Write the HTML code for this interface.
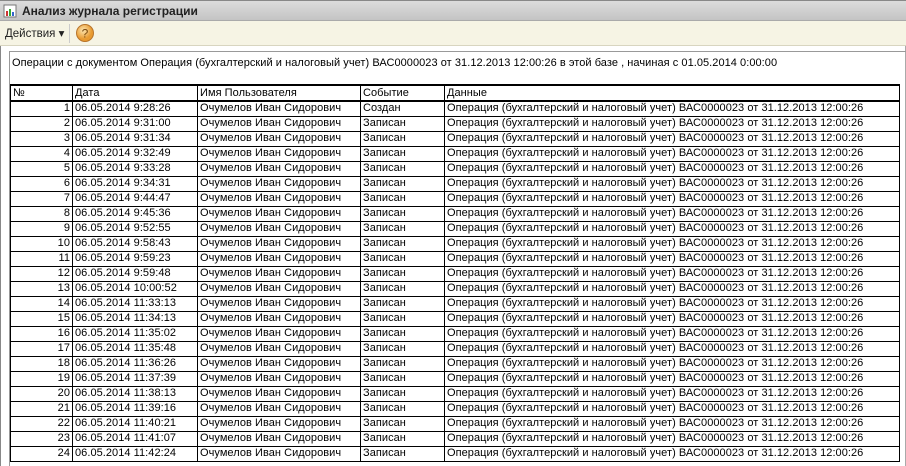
<!DOCTYPE html>
<html><head><meta charset="utf-8"><style>
*{margin:0;padding:0;box-sizing:border-box}
body{width:906px;height:466px;overflow:hidden;background:#fff;font-family:"Liberation Sans",Arial,sans-serif;font-size:11px;color:#000;position:relative;letter-spacing:0.05px}
#title{position:absolute;left:0;top:0;width:906px;height:21px;background:linear-gradient(#dcdcdc,#c4c4c4);border-top:1px solid #888;border-bottom:1px solid #aaa}
#title span{position:absolute;left:22px;top:3px;font-weight:bold;font-size:12px;color:#222;letter-spacing:0}
#tb{position:absolute;left:0;top:21px;width:906px;height:25px;background:#f6f4e4;border-bottom:1px solid #d8d5c0}
#tb .a{position:absolute;left:5px;top:5px;font-size:11.5px;color:#222;letter-spacing:0}
#frame{position:absolute;left:0;top:46px;width:906px;height:420px;border-left:1px solid #888;border-right:1px solid #aaa}
#panel{position:absolute;left:9px;top:51px;width:897px;height:415px;border-left:1px solid #999;border-top:1px solid #999}
#cap{position:absolute;left:12px;top:57px;white-space:nowrap}
table{position:absolute;left:10px;top:84px;border-collapse:collapse;table-layout:fixed}
td{height:15px;border:1px solid #000;padding:0 2px;white-space:nowrap;overflow:hidden;line-height:13px}
tr.h td{border-top:2px solid #000;border-bottom:2px solid #000;height:16px}
td.n{text-align:right}
</style></head><body>
<div id="title"><svg style="position:absolute;left:3px;top:3px" width="14" height="14"><rect x="1" y="1" width="12" height="12" fill="#fff" stroke="#777"/><rect x="3" y="7" width="2" height="5" fill="#c33"/><rect x="6" y="5" width="2" height="7" fill="#3a3"/><rect x="9" y="8" width="2" height="4" fill="#36c"/></svg><span>Анализ журнала регистрации</span></div>
<div id="tb"><span class="a">Действия ▾</span><div style="position:absolute;left:69px;top:3px;width:1px;height:19px;background:#ccc"></div>
<svg style="position:absolute;left:75px;top:2px" width="20" height="20"><defs><radialGradient id="g" cx="40%" cy="35%"><stop offset="0" stop-color="#fde6b0"/><stop offset="1" stop-color="#e89a30"/></radialGradient></defs><circle cx="10" cy="10" r="8.5" fill="url(#g)" stroke="#b8742a"/><text x="10" y="14.5" text-anchor="middle" font-size="12" font-family="Liberation Sans" fill="#7a4a10">?</text></svg></div>
<div id="frame"></div>
<div id="panel"></div>
<div id="cap">Операции с документом Операция (бухгалтерский и налоговый учет) ВАС0000023 от 31.12.2013 12:00:26 в этой базе , начиная с 01.05.2014 0:00:00</div>
<table>
<colgroup><col style="width:62px"><col style="width:125px"><col style="width:163px"><col style="width:84px"><col style="width:455px"></colgroup>
<tr class="h"><td>№</td><td>Дата</td><td>Имя Пользователя</td><td>Событие</td><td>Данные</td></tr>
<tr><td class="n">1</td><td>06.05.2014 9:28:26</td><td>Очумелов Иван Сидорович</td><td>Создан</td><td>Операция (бухгалтерский и налоговый учет) ВАС0000023 от 31.12.2013 12:00:26</td></tr>
<tr><td class="n">2</td><td>06.05.2014 9:31:00</td><td>Очумелов Иван Сидорович</td><td>Записан</td><td>Операция (бухгалтерский и налоговый учет) ВАС0000023 от 31.12.2013 12:00:26</td></tr>
<tr><td class="n">3</td><td>06.05.2014 9:31:34</td><td>Очумелов Иван Сидорович</td><td>Записан</td><td>Операция (бухгалтерский и налоговый учет) ВАС0000023 от 31.12.2013 12:00:26</td></tr>
<tr><td class="n">4</td><td>06.05.2014 9:32:49</td><td>Очумелов Иван Сидорович</td><td>Записан</td><td>Операция (бухгалтерский и налоговый учет) ВАС0000023 от 31.12.2013 12:00:26</td></tr>
<tr><td class="n">5</td><td>06.05.2014 9:33:28</td><td>Очумелов Иван Сидорович</td><td>Записан</td><td>Операция (бухгалтерский и налоговый учет) ВАС0000023 от 31.12.2013 12:00:26</td></tr>
<tr><td class="n">6</td><td>06.05.2014 9:34:31</td><td>Очумелов Иван Сидорович</td><td>Записан</td><td>Операция (бухгалтерский и налоговый учет) ВАС0000023 от 31.12.2013 12:00:26</td></tr>
<tr><td class="n">7</td><td>06.05.2014 9:44:47</td><td>Очумелов Иван Сидорович</td><td>Записан</td><td>Операция (бухгалтерский и налоговый учет) ВАС0000023 от 31.12.2013 12:00:26</td></tr>
<tr><td class="n">8</td><td>06.05.2014 9:45:36</td><td>Очумелов Иван Сидорович</td><td>Записан</td><td>Операция (бухгалтерский и налоговый учет) ВАС0000023 от 31.12.2013 12:00:26</td></tr>
<tr><td class="n">9</td><td>06.05.2014 9:52:55</td><td>Очумелов Иван Сидорович</td><td>Записан</td><td>Операция (бухгалтерский и налоговый учет) ВАС0000023 от 31.12.2013 12:00:26</td></tr>
<tr><td class="n">10</td><td>06.05.2014 9:58:43</td><td>Очумелов Иван Сидорович</td><td>Записан</td><td>Операция (бухгалтерский и налоговый учет) ВАС0000023 от 31.12.2013 12:00:26</td></tr>
<tr><td class="n">11</td><td>06.05.2014 9:59:23</td><td>Очумелов Иван Сидорович</td><td>Записан</td><td>Операция (бухгалтерский и налоговый учет) ВАС0000023 от 31.12.2013 12:00:26</td></tr>
<tr><td class="n">12</td><td>06.05.2014 9:59:48</td><td>Очумелов Иван Сидорович</td><td>Записан</td><td>Операция (бухгалтерский и налоговый учет) ВАС0000023 от 31.12.2013 12:00:26</td></tr>
<tr><td class="n">13</td><td>06.05.2014 10:00:52</td><td>Очумелов Иван Сидорович</td><td>Записан</td><td>Операция (бухгалтерский и налоговый учет) ВАС0000023 от 31.12.2013 12:00:26</td></tr>
<tr><td class="n">14</td><td>06.05.2014 11:33:13</td><td>Очумелов Иван Сидорович</td><td>Записан</td><td>Операция (бухгалтерский и налоговый учет) ВАС0000023 от 31.12.2013 12:00:26</td></tr>
<tr><td class="n">15</td><td>06.05.2014 11:34:13</td><td>Очумелов Иван Сидорович</td><td>Записан</td><td>Операция (бухгалтерский и налоговый учет) ВАС0000023 от 31.12.2013 12:00:26</td></tr>
<tr><td class="n">16</td><td>06.05.2014 11:35:02</td><td>Очумелов Иван Сидорович</td><td>Записан</td><td>Операция (бухгалтерский и налоговый учет) ВАС0000023 от 31.12.2013 12:00:26</td></tr>
<tr><td class="n">17</td><td>06.05.2014 11:35:48</td><td>Очумелов Иван Сидорович</td><td>Записан</td><td>Операция (бухгалтерский и налоговый учет) ВАС0000023 от 31.12.2013 12:00:26</td></tr>
<tr><td class="n">18</td><td>06.05.2014 11:36:26</td><td>Очумелов Иван Сидорович</td><td>Записан</td><td>Операция (бухгалтерский и налоговый учет) ВАС0000023 от 31.12.2013 12:00:26</td></tr>
<tr><td class="n">19</td><td>06.05.2014 11:37:39</td><td>Очумелов Иван Сидорович</td><td>Записан</td><td>Операция (бухгалтерский и налоговый учет) ВАС0000023 от 31.12.2013 12:00:26</td></tr>
<tr><td class="n">20</td><td>06.05.2014 11:38:13</td><td>Очумелов Иван Сидорович</td><td>Записан</td><td>Операция (бухгалтерский и налоговый учет) ВАС0000023 от 31.12.2013 12:00:26</td></tr>
<tr><td class="n">21</td><td>06.05.2014 11:39:16</td><td>Очумелов Иван Сидорович</td><td>Записан</td><td>Операция (бухгалтерский и налоговый учет) ВАС0000023 от 31.12.2013 12:00:26</td></tr>
<tr><td class="n">22</td><td>06.05.2014 11:40:21</td><td>Очумелов Иван Сидорович</td><td>Записан</td><td>Операция (бухгалтерский и налоговый учет) ВАС0000023 от 31.12.2013 12:00:26</td></tr>
<tr><td class="n">23</td><td>06.05.2014 11:41:07</td><td>Очумелов Иван Сидорович</td><td>Записан</td><td>Операция (бухгалтерский и налоговый учет) ВАС0000023 от 31.12.2013 12:00:26</td></tr>
<tr><td class="n">24</td><td>06.05.2014 11:42:24</td><td>Очумелов Иван Сидорович</td><td>Записан</td><td>Операция (бухгалтерский и налоговый учет) ВАС0000023 от 31.12.2013 12:00:26</td></tr>
</table>
</body></html>
